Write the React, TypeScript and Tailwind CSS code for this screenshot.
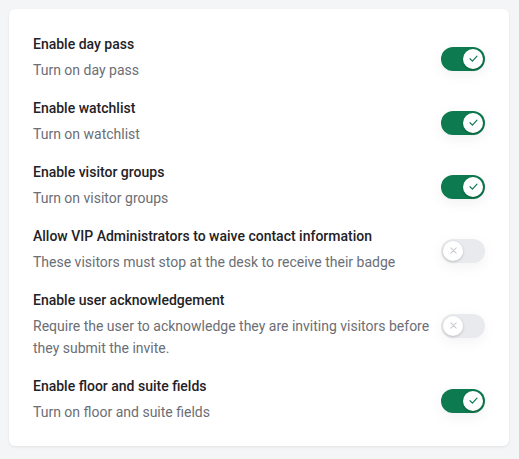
import React from "react";

type Row = { title: string; desc: string; on: boolean };

const rows: Row[] = [
  { title: "Enable day pass", desc: "Turn on day pass", on: true },
  { title: "Enable watchlist", desc: "Turn on watchlist", on: true },
  { title: "Enable visitor groups", desc: "Turn on visitor groups", on: true },
  {
    title: "Allow VIP Administrators to waive contact information",
    desc: "These visitors must stop at the desk to receive their badge",
    on: false,
  },
  {
    title: "Enable user acknowledgement",
    desc: "Require the user to acknowledge they are inviting visitors before they submit the invite.",
    on: false,
  },
  { title: "Enable floor and suite fields", desc: "Turn on floor and suite fields", on: true },
];

function Toggle({ on }: { on: boolean }) {
  return (
    <div
      className={
        on
          ? "relative w-[44px] h-[24px] rounded-full bg-[#0d7a4f] shrink-0 shadow-[0_4px_14px_rgba(0,0,0,0.06)]"
          : "relative w-[44px] h-[24px] rounded-full bg-[#e9eaed] shrink-0 shadow-[0_4px_14px_rgba(0,0,0,0.05)]"
      }
    >
      <div
        className={
          on
            ? "absolute top-[2px] right-[2px] w-[20px] h-[20px] rounded-full bg-white flex items-center justify-center shadow-[0_1px_3px_rgba(0,0,0,0.25)]"
            : "absolute top-[2px] left-[2px] w-[20px] h-[20px] rounded-full bg-white flex items-center justify-center shadow-[0_1px_3px_rgba(0,0,0,0.2)]"
        }
      >
        {on ? (
          <svg width="11" height="11" viewBox="0 0 12 12" fill="none">
            <path d="M2.2 6.3 L4.8 8.8 L9.8 3.4" stroke="#0d7a4f" strokeWidth="1.3" strokeLinecap="round" strokeLinejoin="round" />
          </svg>
        ) : (
          <svg width="9" height="9" viewBox="0 0 10 10" fill="none">
            <path d="M2 2 L8 8 M8 2 L2 8" stroke="#c9cbd0" strokeWidth="1.2" strokeLinecap="round" />
          </svg>
        )}
      </div>
    </div>
  );
}

export default function App() {
  return (
    <div
      className="min-h-[459px] w-full bg-[#f4f5f7] p-[9px] pr-[10px]"
      style={{ fontFamily: "Roboto, 'Liberation Sans', sans-serif" }}
    >
      <div className="bg-white rounded-md shadow-[0_1px_3px_rgba(0,0,0,0.08)] px-6 pt-[25px] pb-[23px] flex flex-col gap-[17px]">
        {rows.map((r) => (
          <div key={r.title} className="flex items-center">
            <div className="flex-1 min-w-0 pr-[6px]">
              <div className="text-[14px] leading-5 font-medium text-[#1f2227]">{r.title}</div>
              <div className="mt-[5px] text-[14px] leading-[22px] text-[#6b6e75]">{r.desc}</div>
            </div>
            <div className="mt-[2px]">
              <Toggle on={r.on} />
            </div>
          </div>
        ))}
      </div>
    </div>
  );
}
